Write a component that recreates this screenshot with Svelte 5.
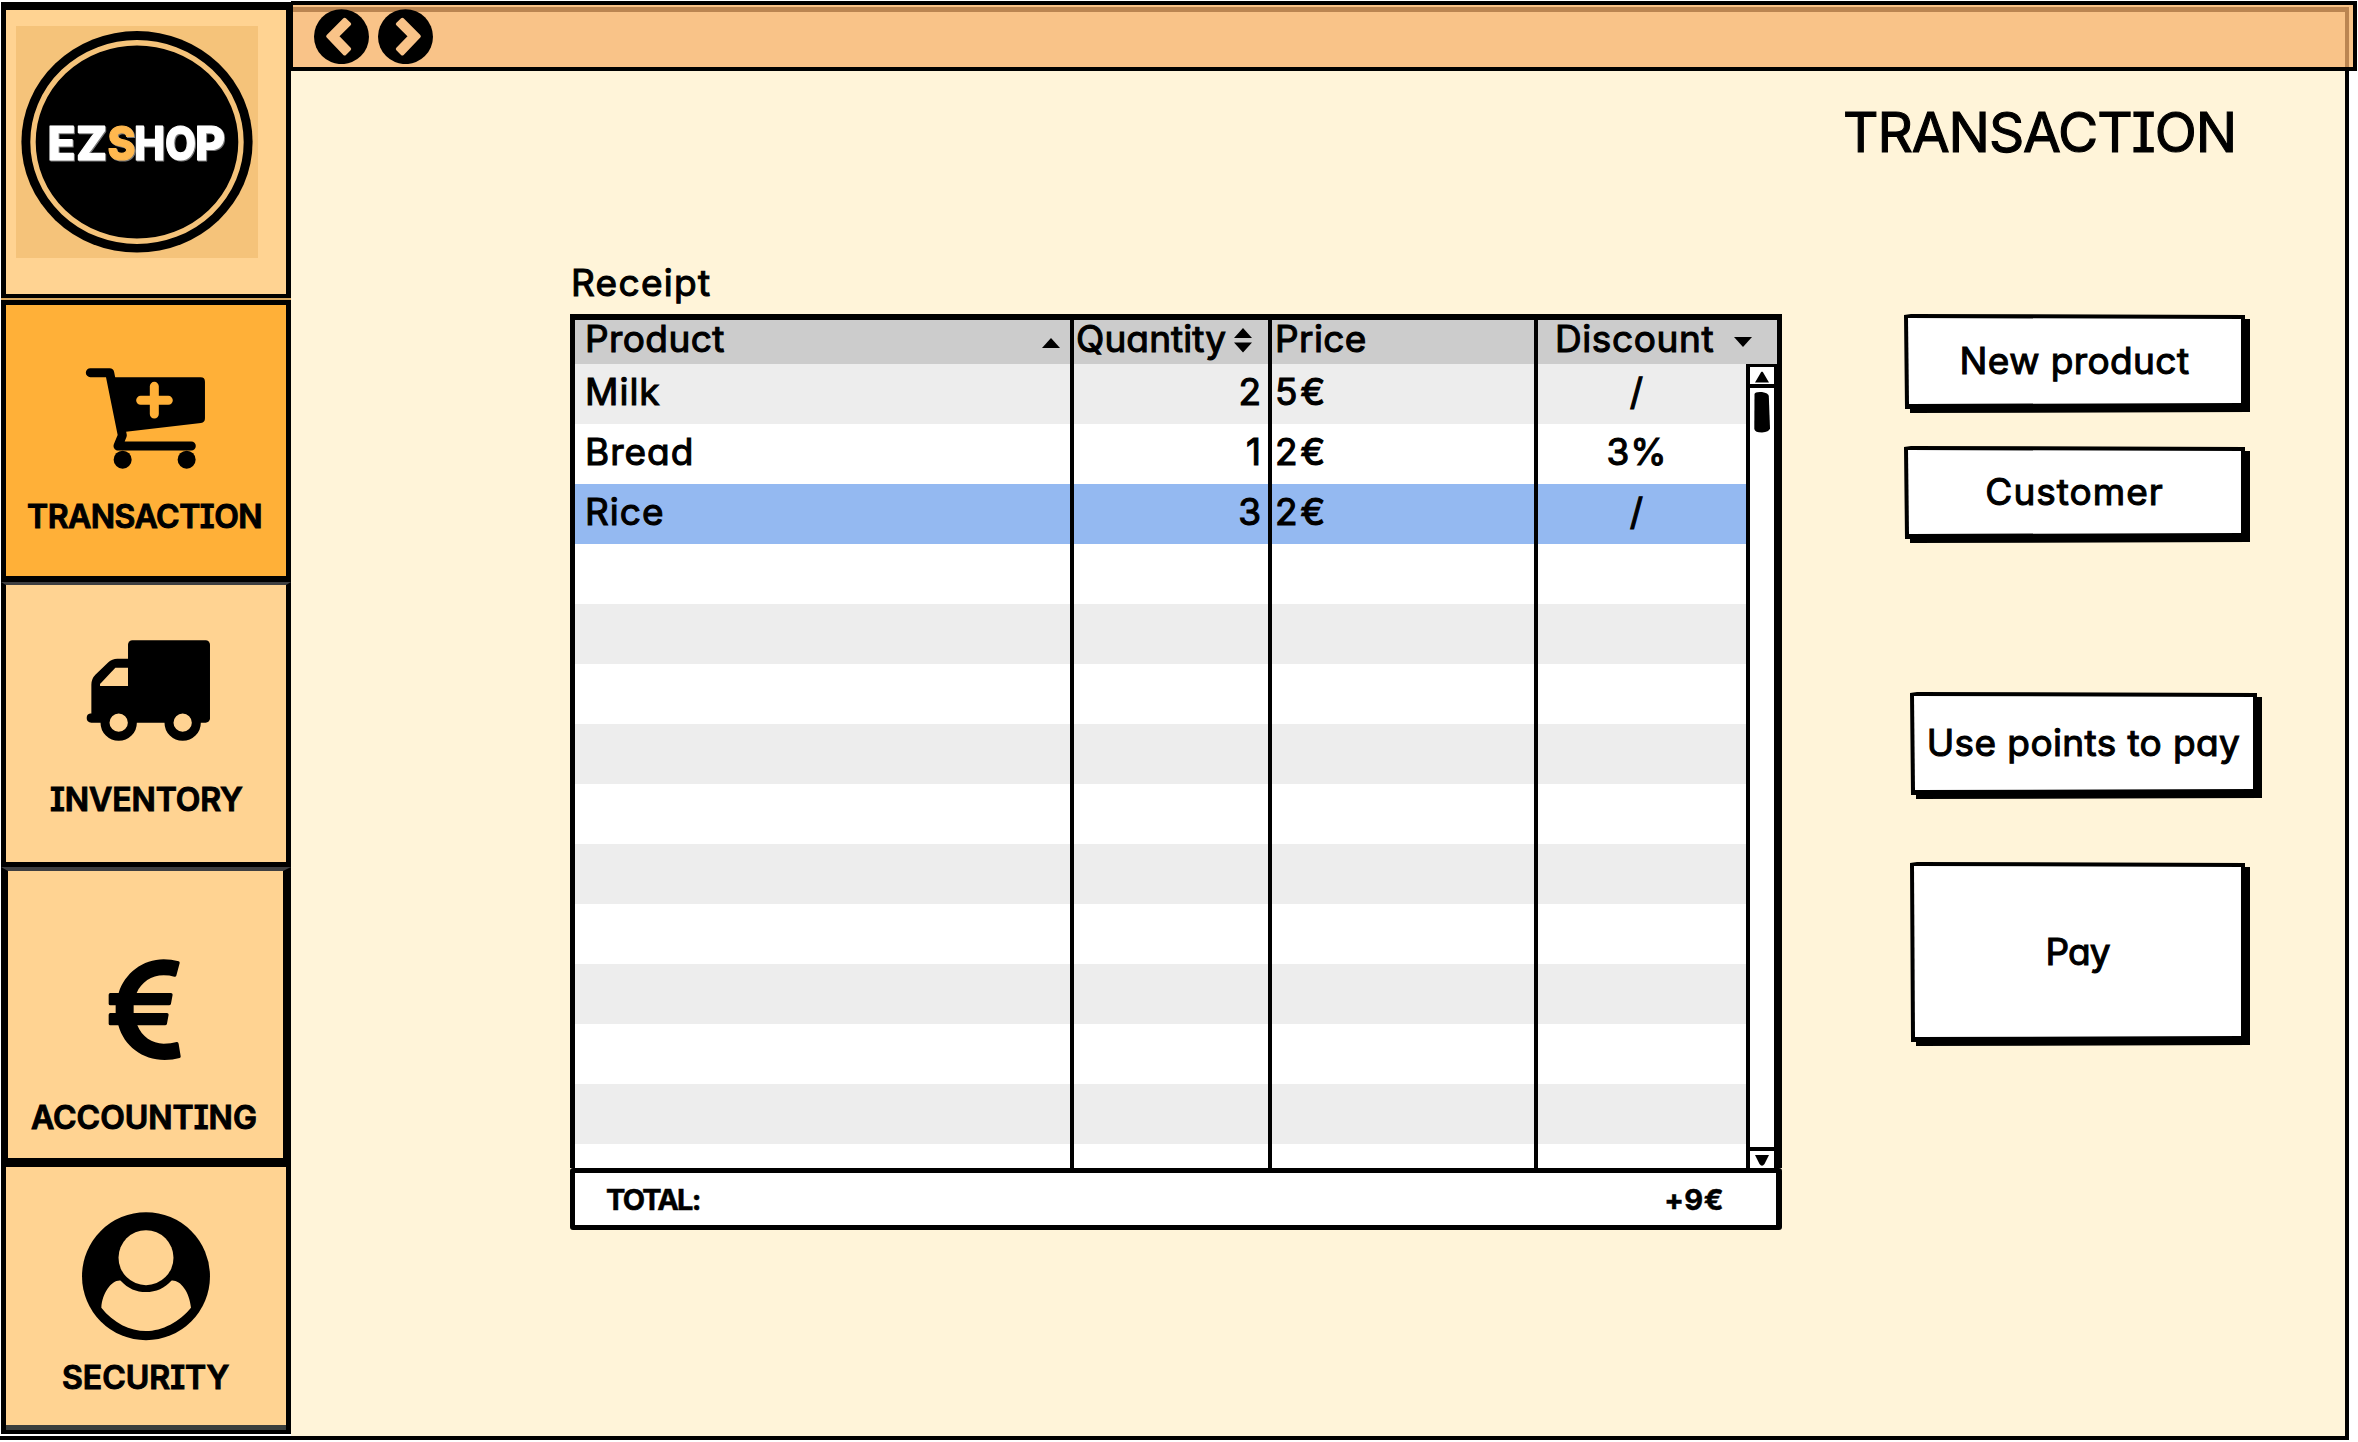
<script>
  const rows = [
    { product: 'Milk', quantity: '2', price: '5€', discount: '/' },
    { product: 'Bread', quantity: '1', price: '2€', discount: '3%' },
    { product: 'Rice', quantity: '3', price: '2€', discount: '/', selected: true },
    ...Array.from({ length: 11 }, () => ({ product: '', quantity: '', price: '', discount: '' }))
  ];
  // Each logo letter with its left edge and width
  const word = [
    ['E', 47.5, 28], ['Z', 76, 31], ['S', 107.5, 28], ['H', 134, 31], ['O', 165, 31], ['P', 195, 30]
  ];
</script>

<div class="app">
  <nav class="sidebar">
    <div class="brand">
      <svg class="logo" viewBox="16 26 242 232" width="242" height="232">
        <rect x="16" y="26" width="242" height="232" fill="#f5c37a" />
        <ellipse cx="137" cy="141.8" rx="115.6" ry="110.8" />
        <ellipse cx="137" cy="142" rx="104" ry="99.3" fill="none" stroke="#f5c37a" stroke-width="5.4" />
        <g class="word">
          {#each word as [c, x, w]}<text class:accent={c === 'S'} {x} y="160" textLength={w} lengthAdjust="spacingAndGlyphs">{c}</text>{/each}
        </g>
      </svg>
    </div>

    <div class="tile transaction">
      <svg viewBox="255 232 364 308" width="121.3" height="102.7">
        <path d="M271 249H329L367 437L354 469H574" fill="none" stroke="#000" stroke-width="27" stroke-linecap="round" stroke-linejoin="round" />
        <path d="M330 263H602q13 0 13 13V386q0 13-12 14L378 426l-16 8z" />
        <circle cx="368" cy="510" r="27" />
        <circle cx="560" cy="510" r="27" />
        <path d="M463 290V373M422 332H505" stroke="#ffb038" stroke-width="27" stroke-linecap="round" />
      </svg>
      <span>TRANSACTION</span>
    </div>

    <div class="tile inventory">
      <svg viewBox="255 208 380 310" width="126.7" height="103.3">
        <rect x="384" y="212" width="246" height="247" rx="13" />
        <path d="M274 445V345q0-18 12-30L325 278q11-11 27-11H392V459H274q-14-1-14-14t14-14z" />
        <path d="M300 349V343L346 294H384V349z" fill="#ffd392" />
        <circle cx="356" cy="459" r="41" fill="#ffd392" stroke="#000" stroke-width="27" />
        <circle cx="548" cy="459" r="41" fill="#ffd392" stroke="#000" stroke-width="27" />
      </svg>
      <span>INVENTORY</span>
    </div>

    <div class="tile accounting">
      <svg viewBox="322 324 226 310" width="75.3" height="103.3">
        <path d="M537 334Q515 328 492 328C430 328 375 370 357 429H332q-5 0-5 5V461q0 5 5 5H348V489H332q-5 0-5 5V521q0 5 5 5H356C373 588 428 630 495 630Q520 630 540 624q4-1 3-6L537 581q-1-6-6-5Q515 581 492 581C457 581 427 560 413 526H496q5 0 6-5L507 494q0-5-5-5H402V466H508q5 0 6-5L519 434q0-5-5-5H411C425 397 455 376 492 376Q510 376 524 380q5 1 6-3L540 340q1-5-3-6z" />
      </svg>
      <span>ACCOUNTING</span>
    </div>

    <div class="tile security">
      <svg viewBox="246 217 384 385" width="128" height="128.3">
        <circle cx="438" cy="409.5" r="192" />
        <circle cx="438" cy="354" r="82.5" fill="#ffd392" />
        <path d="M362 423C335 420 307 460 304 504C340 550 390 574 438 574S540 546 573 504C568 455 540 420 514 423C495 445 468 457 438 457S385 447 362 423z" fill="#ffd392" />
      </svg>
      <span>SECURITY</span>
    </div>
  </nav>

  <main>
    <header class="toolbar">
      <svg viewBox="942 26 165 166" width="55" height="55.3">
        <circle cx="1024.500" cy="109" r="82.500" />
        <path d="M984 108L1034 58L1048 71L1011 108L1048 146L1034 160z" fill="#f9c388" stroke="#f9c388" stroke-width="11" stroke-linejoin="round" />
      </svg>
      <svg viewBox="1134 26 165 166" width="55" height="55.3">
        <circle cx="1216.500" cy="109" r="82.500" />
        <path d="M1257 108L1207 58L1193 71L1230 108L1193 146L1207 160z" fill="#f9c388" stroke="#f9c388" stroke-width="11" stroke-linejoin="round" />
      </svg>
    </header>

    <div class="page">
      <h1>TRANSACTION</h1>
      <div class="columns">
        <section class="receipt">
          <h2>Receipt</h2>
          <div class="table">
            <div class="head">
              <div class="cell product"><span>Product</span>
                <svg width="18" height="10" viewBox="0 0 18 10"><path d="M9 0L18 10H0z" /></svg>
              </div>
              <div class="cell quantity"><span>Quantity</span>
                <svg width="18" height="26" viewBox="0 0 18 26"><path d="M9 1L18 11H0zM9 25.500L18 15.500H0z" /></svg>
              </div>
              <div class="cell price"><span>Price</span></div>
              <div class="cell discount"><span>Discount</span>
                <svg width="18" height="10" viewBox="0 0 18 10"><path d="M9 10L18 0H0z" /></svg>
              </div>
            </div>
            <div class="body">
              <div class="rows">
                {#each rows as row}
                  <div class="row" class:selected={row.selected}>
                    <div class="cell product">{row.product}</div>
                    <div class="cell quantity">{row.quantity}</div>
                    <div class="cell price">{row.price}</div>
                    <div class="cell discount">{row.discount}</div>
                  </div>
                {/each}
              </div>
              <div class="scrollbar">
                <div class="arrow up"><svg width="16" height="14" viewBox="0 0 16 14"><path d="M8 1.500Q9 1.500 10 4L15 12.500H1L6 4Q7 1.500 8 1.500z" /></svg></div>
                <svg class="thumb" width="16" height="42" viewBox="0 0 16 42"><path d="M0.500 3Q1 .5 8 1Q14.500 2 14.800 5L16 37.500Q15 41 8 41.500Q1 41.500 .3 38z" /></svg>
                <div class="arrow down"><svg width="16" height="13" viewBox="0 0 16 13"><path d="M1 1H15L10.500 10Q8 13.500 5.500 10z" /></svg></div>
              </div>
            </div>
          </div>
          <div class="total"><span class="label">TOTAL:</span><span class="sum">+9€</span></div>
        </section>

        <aside class="actions">
          <button class="new"><span>New product</span></button>
          <button class="customer"><span>Customer</span></button>
          <button class="points"><span>Use points to pay</span></button>
          <button class="pay"><span>Pay</span></button>
        </aside>
      </div>
    </div>
  </main>
</div>

<style>
  :global(body) { background: #fff; overflow: hidden; }
  svg { display: block; flex: none; }
  .app {
    display: flex;
    width: 2358px;
    height: 1442px;
    color: #000;
    font: 400 37px/40px Inter, 'Noto Sans', sans-serif;
    font-feature-settings: 'cv11';
    -webkit-text-stroke: 1.1px #000;
    stroke-linejoin: round;
    white-space: nowrap;
  }
  .app, .app * { box-sizing: border-box; }

  .sidebar { width: 291px; height: 1440px; flex: none; padding: 2px 0 0 1px; border-bottom: 4px solid #000; }
  .brand {
    height: 296px;
    padding: 16px 0 0 10px;
    border: solid #000;
    border-width: 8px 5px 4px 5px;
    background: #ffd392;
    margin-bottom: 2px;
    box-shadow: 0 2px #d9a860;
  }
  .word { font: 800 47px Inter, sans-serif; font-feature-settings: normal; filter: drop-shadow(1.5px 1.5px 0 #777); -webkit-text-stroke: 0; }
  .word text { fill: #fff; stroke: #fff; stroke-width: 1.2px; }
  .word text.accent { fill: #ffb84f; stroke: #ffb84f; }

  .tile {
    display: flex;
    flex-direction: column;
    align-items: flex-start;
    background: #ffd392;
    border: solid #000;
    border-width: 0 5px;
    font-weight: 600;
    font-size: 32px;
    font-feature-settings: 'cv08';
    -webkit-text-stroke: 1px #000;
  }
  .transaction { height: 282px; padding-top: 62.300px; border-top-width: 5px; border-bottom-width: 6px; background: #ffb038; }
  .transaction svg { margin: 0 0 27.500px 79px; }
  .transaction span { margin-left: 21px; letter-spacing: -0.5px; }
  .inventory { height: 285px; padding-top: 54.300px; border-top: 3px solid #3e3e40; border-bottom-width: 5px; }
  .inventory svg { margin: 0 0 37px 79px; }
  .inventory span { margin-left: 44px; letter-spacing: -0.1px; }
  .accounting { height: 300px; padding-top: 87px; border-width: 4px 8px 9px 7px; border-top-color: #3e3e40; }
  .accounting svg { margin: 0 0 36.500px 99.300px; }
  .accounting span { margin-left: 23px; letter-spacing: 0; }
  .security { height: 267px; padding-top: 45.300px; border-bottom-width: 4px; box-shadow: inset 0 -5px #3a3e3d; }
  .security svg { margin: 0 0 17.400px 76px; }
  .security span { margin-left: 56px; letter-spacing: 0; }

  main { flex: 1; padding-top: 1px; }
  .toolbar {
    display: flex;
    gap: 9px;
    height: 70px;
    margin-right: 1px;
    padding: 4px 0 0 21px;
    border: solid #000;
    border-width: 4px 4px 4px 2px;
    background:
      linear-gradient(#bb8551, #bb8551) 0 2px / calc(100% - 4px) 5px no-repeat,
      linear-gradient(#bb8551, #bb8551) calc(100% - 4px) 2px / 4px 100% no-repeat,
      #f9c388;
  }
  .page {
    height: 1369px;
    margin-right: 9px;
    padding-top: 31px;
    border: solid #000;
    border-width: 0 4px 4px 0;
    background: #fff4d9;
  }
  h1, h2 { margin: 0; font: inherit; }
  h1 { margin-right: 109px; text-align: right; font-size: 55px; line-height: 61px; height: 60px; letter-spacing: -1.1px; font-feature-settings: 'cv08'; }
  .columns { display: flex; padding: 101px 0 0 279px; align-items: flex-start; }
  .receipt { width: 1212px; }
  h2 { padding-left: 1px; margin-bottom: 11px; letter-spacing: 1.3px; }

  .table { height: 854px; border: solid #000; border-width: 6px 5px 0 5px; background: #fff; }
  .head, .row { display: flex; }
  .head { height: 44px; background: #ccc; line-height: 37px; letter-spacing: 0.4px; }
  .cell { border-right: 4px solid #000; flex: none; height: 100%; display: flex; }
  .product { width: 499px; padding-left: 10px; }
  .quantity { width: 198px; padding-left: 2px; }
  .price { width: 266px; padding-left: 3px; }
  .discount { width: 208px; border-right: 0; }
  .head .quantity { letter-spacing: 0.1px; }
  .head .discount { width: 213px; padding-left: 17px; letter-spacing: 0.6px; }
  .head .product svg { margin: 18px 10px 0 auto; }
  .head .quantity svg { margin: 7px 16px 0 auto; }
  .head .discount svg { margin: 17px 0 0 20px; }
  .body { display: flex; height: 804px; margin-right: -5px; }
  .rows { width: 1171px; flex: none; overflow: hidden; }
  .row { height: 60px; line-height: 55px; }
  .row .product { letter-spacing: 1px; }
  .row:nth-child(odd) { background: #ededed; }
  .row.selected { background: #94b9f1; }
  .row .quantity { justify-content: flex-end; padding-right: 7px; }
  .row .price { letter-spacing: 3px; }
  .row .discount { justify-content: center; padding-right: 10px; letter-spacing: 1px; }
  .scrollbar {
    display: flex;
    flex-direction: column;
    width: 36px;
    flex: none;
    border: solid #000;
    border-width: 3px 8px 0 4px;
    background: #fff;
  }
  .arrow { display: flex; justify-content: center; height: 21px; padding-top: 3px; border-bottom: 4px solid #000; }
  .thumb { margin: 3px 0 0 4px; }
  .arrow.down { margin-top: auto; border-top: 4px solid #000; border-bottom: 0; }
  .total {
    display: flex;
    justify-content: space-between;
    height: 62px;
    padding: 8px 52px 0 31px;
    border: solid #000;
    border-width: 5px 6px 5px 5px;
    border-radius: 3px;
    background: #fff;
    font-size: 29px;
    font-weight: 700;
    line-height: 38px;
    -webkit-text-stroke: 0.5px #000;
  }
  .label { letter-spacing: -1.8px; }
  .sum { letter-spacing: 0.5px; }

  .actions { display: flex; flex-direction: column; align-items: flex-start; padding: 51px 0 0 122px; }
  button {
    display: flex;
    width: 346px;
    padding: 4px 9px 9px 4px;
    border: 0;
    background: #000;
    color: #000;
    font: inherit;
    -webkit-text-stroke: inherit;
    font-feature-settings: inherit;
    clip-path: polygon(0 1px, 7px 0, calc(100% - 5px) 1px, calc(100% - 5px) 5px, 100% 5px, 100% calc(100% - 1px), 6px 100%, 6px calc(100% - 4px), 1px calc(100% - 4px));
  }
  button span {
    flex: 1;
    display: flex;
    align-items: center;
    justify-content: center;
    background: #fff;
    clip-path: polygon(0 0, 100% 1px, 100% calc(100% - 1px), 1px 100%);
  }
  .new { height: 99px; letter-spacing: 0.4px; }
  .customer { height: 97px; margin-top: 33px; letter-spacing: 1px; }
  .points { height: 107px; width: 352px; margin: 149px 0 0 6px; letter-spacing: 0.4px; }
  .pay { height: 184px; width: 340px; margin: 63px 0 0 6px; letter-spacing: -1px; }
</style>
